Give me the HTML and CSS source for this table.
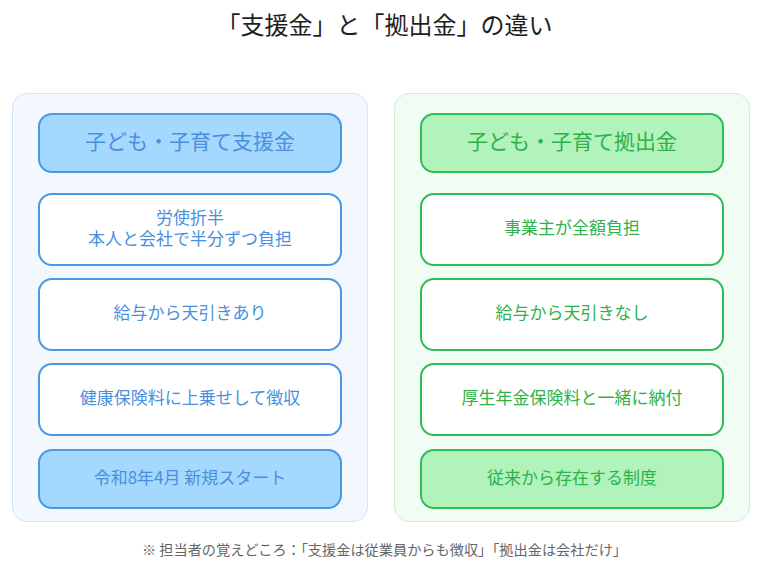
FILE: index.html
```html
<!DOCTYPE html>
<html lang="ja">
<head>
<meta charset="utf-8">
<link rel="stylesheet" href="styles.css">
</head>
<body>
<h1 class="title">「支援金」と「拠出金」の違い</h1>
<div class="columns">
  <section class="panel panel-blue">
    <div class="box box-head">子ども・子育て支援金</div>
    <div class="box">労使折半<br>本人と会社で半分ずつ負担</div>
    <div class="box">給与から天引きあり</div>
    <div class="box">健康保険料に上乗せして徴収</div>
    <div class="box box-foot">令和8年4月 新規スタート</div>
  </section>
  <section class="panel panel-green">
    <div class="box box-head">子ども・子育て拠出金</div>
    <div class="box">事業主が全額負担</div>
    <div class="box">給与から天引きなし</div>
    <div class="box">厚生年金保険料と一緒に納付</div>
    <div class="box box-foot">従来から存在する制度</div>
  </section>
</div>
<p class="note">※ 担当者の覚えどころ：「支援金は従業員からも徴収」「拠出金は会社だけ」</p>
</body>
</html>
```
FILE: styles.css
```css
* { box-sizing: border-box; }
body {
  margin: 0;
  width: 769px;
  height: 561px;
  background: #ffffff;
  font-family: "Noto Sans CJK JP", "Noto Sans", sans-serif;
  overflow: hidden;
}
.title {
  margin: 0;
  padding-top: 8px;
  height: 93px;
  text-align: center;
  font-size: 24px;
  font-weight: 400;
  line-height: 32px;
  color: #1e1e1e;
}
.columns {
  display: flex;
  gap: 26px;
  padding-left: 12px;
}
.panel {
  width: 356px;
  height: 429px;
  border-radius: 15px;
  border: 1.5px solid;
  padding: 19px 25px 0;
  display: flex;
  flex-direction: column;
  gap: 12px;
}
.panel-blue { background: #f3f7fe; border-color: #d3e3f8; }
.panel-green { background: #f1fcf4; border-color: #c8f0d2; }
.box {
  height: 73px;
  border: 2px solid;
  border-radius: 14px;
  background: #ffffff;
  padding-bottom: 6px;
  display: flex;
  align-items: center;
  justify-content: center;
  text-align: center;
  font-size: 17px;
  line-height: 21px;
}
.box-head {
  height: 60px;
  margin-bottom: 8px;
  font-size: 21px;
}
.box-foot {
  height: 60px;
  margin-top: 1px;
}
.panel-blue .box { border-color: #4a97e6; color: #4a8fde; }
.panel-green .box { border-color: #2fbd58; color: #2fb14c; }
.panel-blue .box-head, .panel-blue .box-foot { background: #a5d8ff; }
.panel-green .box-head, .panel-green .box-foot { background: #b2f2bb; }
.note {
  margin: 17px 0 0;
  text-align: center;
  font-size: 14.2px;
  line-height: 20px;
  color: #666666;
}
```
